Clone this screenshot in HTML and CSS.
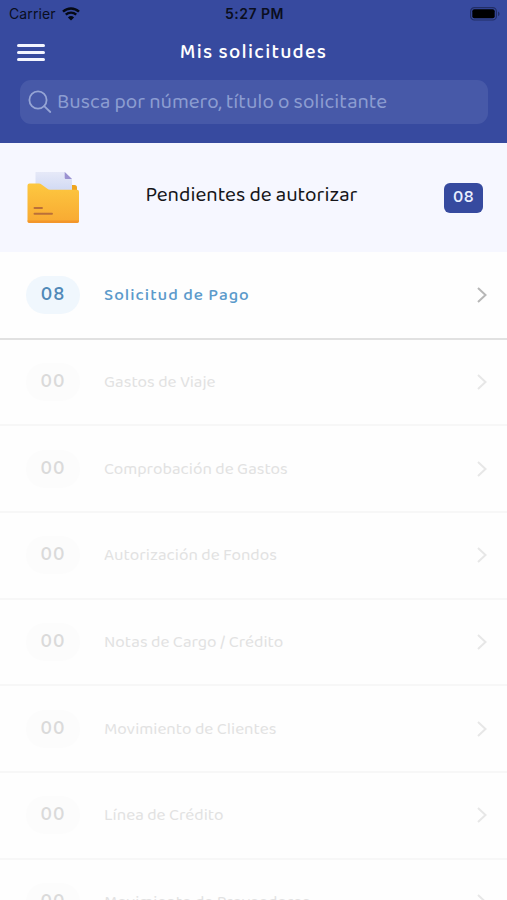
FILE: index.html
```html
<!DOCTYPE html>
<html lang="es">
  <head>
    <meta charset="UTF-8" />
    <meta name="viewport" content="width=device-width, initial-scale=1.0" />
    <title>Mis solicitudes</title>
    <link rel="stylesheet" href="styles.css">
  </head>
  <body>
    <header class="header">
      <div class="status-bar">
        <div class="carrier">
          <span>Carrier</span>
          <svg class="wifi" width="18" height="14" viewBox="0 0 18 14">
            <path d="M1 4.7a11.6 11.6 0 0 1 16 0M3.8 7.7a7.6 7.6 0 0 1 10.4 0" />
            <path class="wifi-dot" d="M9 13.6 5.9 10.4a4.5 4.5 0 0 1 6.2 0z" />
          </svg>
        </div>
        <span class="clock">5:27 PM</span>
        <svg class="battery" width="30" height="14" viewBox="0 0 30 14">
          <rect class="battery-frame" x="0.6" y="0.6" width="25.8" height="12.4" rx="3.8" />
          <rect x="2.3" y="2.3" width="22.4" height="9" rx="2" />
          <path class="battery-tip" d="M28 4.5c2 .8 2 3.8 0 4.6z" />
        </svg>
      </div>

      <div class="nav-bar">
        <button class="menu-button" aria-label="Menú">
          <span></span>
          <span></span>
          <span></span>
        </button>
        <h1><span class="title">Mis solicitudes</span></h1>
      </div>

      <div class="search">
        <svg width="24" height="24" viewBox="0 0 24 24">
          <circle cx="10" cy="10" r="8.6" />
          <path d="M16.2 16.2 22.3 22" />
        </svg>
        <span class="search-text">Busca por número, título o solicitante</span>
      </div>
    </header>

    <section class="pending">
      <svg class="folder" width="54" height="54" viewBox="0 0 54 54">
        <defs>
          <linearGradient id="paper" x1="0" y1="0" x2="0" y2="1">
            <stop offset="0" stop-color="#e6e9f8" />
            <stop offset="1" stop-color="#cbd5f2" />
          </linearGradient>
          <linearGradient id="front" x1="0" y1="0" x2="0" y2="1">
            <stop offset="0" stop-color="#fdc840" />
            <stop offset="1" stop-color="#f8a932" />
          </linearGradient>
        </defs>
        <path fill="#efa51f" d="M44 14h4.5a2.500 2.500 0 0 1 2.500 2.500V22H44z" />
        <path fill="url(#paper)" d="M9.5 1H39l7 7v17H9.500z" />
        <path fill="#9b92d1" d="M38.7 1v5.5c0 1 .5 1.5 1.5 1.5H46z" />
        <path fill="url(#front)" d="M1.500 14.500a2 2 0 0 1 2-2H13c1 0 1.700.3 2.500.9l5.500 4.200c1 .8 2 1.200 3.300 1.200H51a2 2 0 0 1 2 2V50a2 2 0 0 1-2 2H3.500a2 2 0 0 1-2-2z" />
        <path fill="#f3962b" d="M1.500 49.500H53a2.300 2.300 0 0 1-2 2.500H3.500a2.200 2.200 0 0 1-2-2.500z" />
        <path stroke="#ba7039" stroke-width="1.900" stroke-linecap="round" d="M8.500 37h7.500M8.500 42.800H26" />
      </svg>
      <h2><span class="pending-text">Pendientes de autorizar</span></h2>
      <span class="badge">08</span>
    </section>

    <ul class="list">
      <li class="row active">
        <span class="count">08</span>
        <span class="name">Solicitud de Pago</span>
        <svg class="chevron" width="12" height="18" viewBox="0 0 12 18"><path d="M2 2 9.500 9 2 16" /></svg>
      </li>
      <li class="row">
        <span class="count">00</span>
        <span class="name">Gastos de Viaje</span>
        <svg class="chevron" width="12" height="18" viewBox="0 0 12 18"><path d="M2 2 9.500 9 2 16" /></svg>
      </li>
      <li class="row">
        <span class="count">00</span>
        <span class="name">Comprobación de Gastos</span>
        <svg class="chevron" width="12" height="18" viewBox="0 0 12 18"><path d="M2 2 9.500 9 2 16" /></svg>
      </li>
      <li class="row">
        <span class="count">00</span>
        <span class="name">Autorización de Fondos</span>
        <svg class="chevron" width="12" height="18" viewBox="0 0 12 18"><path d="M2 2 9.500 9 2 16" /></svg>
      </li>
      <li class="row">
        <span class="count">00</span>
        <span class="name">Notas de Cargo / Crédito</span>
        <svg class="chevron" width="12" height="18" viewBox="0 0 12 18"><path d="M2 2 9.500 9 2 16" /></svg>
      </li>
      <li class="row">
        <span class="count">00</span>
        <span class="name">Movimiento de Clientes</span>
        <svg class="chevron" width="12" height="18" viewBox="0 0 12 18"><path d="M2 2 9.500 9 2 16" /></svg>
      </li>
      <li class="row">
        <span class="count">00</span>
        <span class="name">Línea de Crédito</span>
        <svg class="chevron" width="12" height="18" viewBox="0 0 12 18"><path d="M2 2 9.500 9 2 16" /></svg>
      </li>
      <li class="row">
        <span class="count">00</span>
        <span class="name">Movimiento de Proveedores</span>
        <svg class="chevron" width="12" height="18" viewBox="0 0 12 18"><path d="M2 2 9.500 9 2 16" /></svg>
      </li>
    </ul>
  </body>
</html>
```

FILE: styles.css
```css
* {
  box-sizing: border-box;
}

body {
  margin: 0;
  height: 900px;
  overflow: hidden;
  background: #fefefe;
  font-family: "Baloo 2", "Noto Sans", sans-serif;
}

h1,
h2 {
  margin: 0;
  font-weight: 400;
}

.header {
  height: 142.5px;
  background: #374a9f;
}

.status-bar {
  display: grid;
  grid-template-columns: 1fr auto 1fr;
  align-items: center;
  height: 27px;
  padding: 0 7px 0 9px;
  font-family: Inter, sans-serif;
  font-size: 14px;
  color: #0a0e20;
}

.carrier {
  display: flex;
  align-items: center;
  gap: 6px;
  letter-spacing: 0.1px;
}

.wifi {
  fill: none;
  stroke: #050914;
  stroke-width: 2.4;
}

.wifi-dot {
  fill: #050914;
  stroke: none;
}

.clock {
  font-weight: 600;
  letter-spacing: 0.5px;
}

.battery {
  justify-self: end;
}

.battery-frame {
  fill: none;
  stroke: #222e66;
  stroke-width: 1.2;
}

.battery-tip {
  fill: #222e66;
}

.nav-bar {
  display: grid;
  grid-template-columns: 30px 1fr 30px;
  align-items: center;
  height: 50px;
  padding: 0 16px;
}

.menu-button {
  display: flex;
  flex-direction: column;
  gap: 4.7px;
  width: 30px;
  padding: 1px 1px 0;
  background: none;
  border: none;
}

.menu-button span {
  height: 2.6px;
  border-radius: 2px;
  background: #f3f5ff;
}

h1 {
  font-size: 20px;
  font-weight: 500;
  line-height: 32px;
  text-align: center;
  color: #fff;
}

.title {
  letter-spacing: 1.25px;
}

.search {
  display: flex;
  align-items: center;
  gap: 5px;
  height: 44px;
  margin: 3px 19px 0 20px;
  padding-left: 8px;
  border-radius: 11px;
  background: #4759a8;
  color: #8c9dd1;
  font-size: 20.7px;
}

.search svg {
  fill: none;
  stroke: #96a5d5;
  stroke-width: 1.8;
  stroke-linecap: round;
}

.pending {
  display: grid;
  grid-template-columns: 54px 1fr 39px;
  align-items: center;
  height: 109px;
  padding: 1px 24px 0 26px;
  background: #f6f7ff;
}

h2 {
  padding: 0 21px 4px 0;
  font-size: 20.8px;
  text-align: center;
  color: #151519;
}

.badge {
  height: 30px;
  border-radius: 6px;
  background: #364a9f;
  color: #e9efff;
  font-size: 17.5px;
  font-weight: 500;
  letter-spacing: 0.5px;
  line-height: 28px;
  text-align: center;
}

.list {
  margin: 0;
  padding: 0;
  list-style: none;
}

.row {
  display: grid;
  grid-template-columns: 54px 1fr 12px;
  column-gap: 24px;
  align-items: center;
  height: 86.7px;
  padding: 0 19px 0 26px;
  border-bottom: 2px solid #f7f7f7;
  color: #e2e2e2;
}

.row.active {
  height: 88px;
  border-bottom-color: #e1e1e1;
  color: #5b9acb;
}

.count {
  height: 38px;
  border-radius: 19px;
  background: #fcfcfc;
  color: #dadada;
  font-size: 19.5px;
  font-weight: 500;
  letter-spacing: 1px;
  line-height: 38px;
  text-align: center;
}

.active .count {
  background: #f0f7fd;
  color: #5189b8;
}

.name {
  font-size: 17.2px;
}

.active .name {
  font-weight: 500;
  letter-spacing: 1px;
}

.chevron {
  fill: none;
  stroke: #e7e7e7;
  stroke-width: 2;
}

.active .chevron {
  stroke: #b7b7b7;
}
```
